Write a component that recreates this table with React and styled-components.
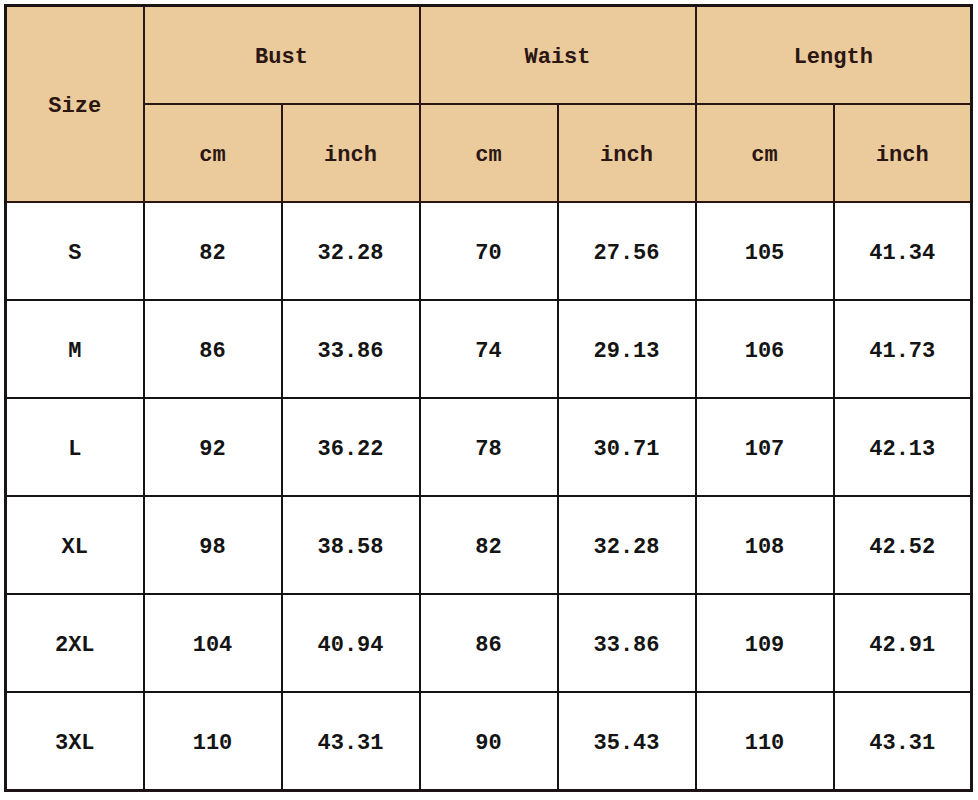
import React from "react";
import styled, { createGlobalStyle } from "styled-components";

const GlobalStyle = createGlobalStyle`
  body {
    margin: 0;
    background: #ffffff;
  }
`;

const rows = [
  ["S", "82", "32.28", "70", "27.56", "105", "41.34"],
  ["M", "86", "33.86", "74", "29.13", "106", "41.73"],
  ["L", "92", "36.22", "78", "30.71", "107", "42.13"],
  ["XL", "98", "38.58", "82", "32.28", "108", "42.52"],
  ["2XL", "104", "40.94", "86", "33.86", "109", "42.91"],
  ["3XL", "110", "43.31", "90", "35.43", "110", "43.31"],
];

const SizeChart = () => {
  return (
    <Page>
      <Table>
        <colgroup>
          {rows[0].map((_, i) => (
            <col key={i} style={{ width: "138px" }} />
          ))}
        </colgroup>
        <thead>
          <tr>
            <HeadCell rowSpan={2}>Size</HeadCell>
            <HeadCell colSpan={2}>Bust</HeadCell>
            <HeadCell colSpan={2}>Waist</HeadCell>
            <HeadCell colSpan={2}>Length</HeadCell>
          </tr>
          <tr>
            <HeadCell>cm</HeadCell>
            <HeadCell>inch</HeadCell>
            <HeadCell>cm</HeadCell>
            <HeadCell>inch</HeadCell>
            <HeadCell>cm</HeadCell>
            <HeadCell>inch</HeadCell>
          </tr>
        </thead>
        <tbody>
          {rows.map((row) => (
            <tr key={row[0]}>
              {row.map((value, i) => (
                <Cell key={i}>{value}</Cell>
              ))}
            </tr>
          ))}
        </tbody>
      </Table>
    </Page>
  );
};

const Page = styled.div`
  padding: 4px 6px 8px 4px;
`;

const Table = styled.table`
  border-collapse: collapse;
  table-layout: fixed;
  width: 968px;
  border: 3px solid #1c1414;
  font-family: "Liberation Mono", "DejaVu Sans Mono", monospace;
  font-weight: bold;
  font-size: 22px;
`;

const HeadCell = styled.th`
  height: 91px;
  padding: 5px 0 0;
  background: #ebca9c;
  color: #2a1612;
  border: 2px solid #2a1612;
  text-align: center;
  vertical-align: middle;
  font-weight: bold;
`;

const Cell = styled.td`
  height: 91px;
  padding: 5px 0 0;
  color: #141414;
  border: 2px solid #141414;
  text-align: center;
  vertical-align: middle;
`;

export default function App() {
  return (
    <>
      <GlobalStyle />
      <SizeChart />
    </>
  );
}
